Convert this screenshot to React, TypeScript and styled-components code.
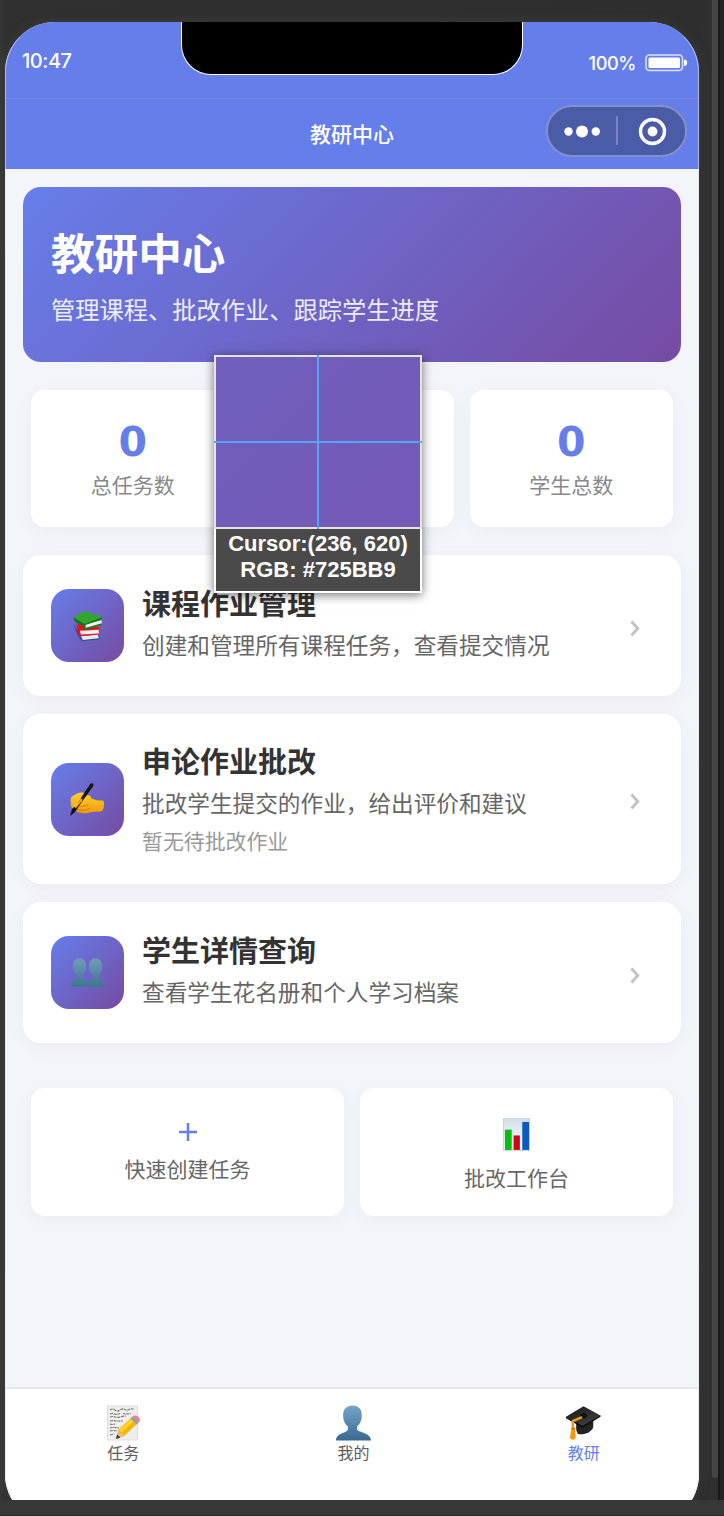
import React from 'react';
import styled, { createGlobalStyle } from 'styled-components';

const GlobalStyle = createGlobalStyle`
  * { box-sizing: border-box; }
  html, body { margin: 0; padding: 0; }
  body {
    background: #2e2e2e;
    font-family: Inter, "Noto Sans CJK SC", sans-serif;
    overflow: hidden;
  }
  svg { display: block; flex: none; }
`;

const accent = '#667eea';
const brandGradient = 'linear-gradient(135deg, #667eea 0%, #764ba2 100%)';

const Workspace = styled.div`
  display: flex;
  flex-direction: column;
  width: 724px;
  height: 1516px;
  overflow: hidden;
  background: linear-gradient(90deg, #373737 0, #303030 6px, #2e2e2e 700px, #303030 712px);
`;

const Stage = styled.div`
  display: flex;
  height: 1500px;
  overflow: hidden;
`;

const StageBody = styled.div`
  width: 712px;
  padding: 22px 0 0 5px;
`;

const ScrollThumb = styled.div`
  width: 6px;
  height: 1478px;
  background: #454545;
  border-radius: 0 0 2px 2px;
`;

const SideRail = styled.div`
  width: 6px;
  margin-left: auto;
  background: #242424;
  border-left: 2px solid #191919;
`;

const StageFooter = styled.div`
  height: 16px;
  background: #373737;
  border-bottom: 1px solid #2b2527;
`;

const Phone = styled.div`
  position: relative;
  display: flex;
  flex-direction: column;
  width: 694px;
  height: 1502px;
  border-radius: 50px;
  overflow: hidden;
  background: #f4f5fa;
  box-shadow: 0 0 12px rgba(90, 90, 90, 0.35);

  &::after {
    content: '';
    position: absolute;
    inset: 0;
    border: 1px solid rgba(225, 225, 230, 0.6);
    border-top-color: transparent;
    border-radius: 50px;
    pointer-events: none;
  }
`;

const StatusBar = styled.div`
  display: flex;
  justify-content: space-between;
  height: 77px;
  padding: 0 11px 0 17px;
  background: ${accent};
  border-bottom: 1px solid #7688e8;
  color: #fff;
`;

const Clock = styled.span`
  width: 159px;
  padding-top: 27px;
  font-size: 20px;
  line-height: 24px;
  font-weight: 500;
  letter-spacing: -0.45px;
`;

const Notch = styled.div`
  width: 342px;
  height: 53px;
  background: #000;
  border: 1.5px solid #fff;
  border-top: 0;
  border-radius: 0 0 30px 30px;
`;

const Power = styled.div`
  display: flex;
  justify-content: flex-end;
  gap: 9px;
  width: 165px;
  padding-top: 29px;
  font-size: 18.2px;
  line-height: 24px;
  font-weight: 500;
  letter-spacing: -0.4px;
  white-space: nowrap;

  svg { margin-top: 3px; }
`;

const NavBar = styled.header`
  display: grid;
  grid-template-columns: 1fr auto 1fr;
  height: 70px;
  padding: 0 12px;
  background: ${accent};
`;

const NavTitle = styled.h1`
  grid-column: 2;
  margin: 0;
  padding-top: 21px;
  color: #fff;
  font-size: 21px;
  line-height: 30px;
  font-weight: 500;
`;

const Capsule = styled.div`
  justify-self: end;
  display: flex;
  align-items: center;
  width: 141px;
  height: 52px;
  margin-top: 6px;
  border: 2px solid #8490cb;
  border-radius: 26px;
  background: #4a5ba8;
`;

const Content = styled.main`
  flex: none;
  height: 1218px;
  padding: 18px 18px 0;
`;

const Hero = styled.section`
  height: 175px;
  padding: 38px 28px 0;
  border-radius: 18px;
  background: ${brandGradient};
  color: #fff;
`;

const HeroTitle = styled.h2`
  margin: 0;
  font-size: 43.6px;
  line-height: 60px;
  font-weight: 700;
`;

const HeroText = styled.p`
  margin: 9px 0 0;
  font-size: 24.25px;
  line-height: 34px;
  opacity: 0.88;
`;

const CardRow = styled.section<{ $top: number }>`
  display: flex;
  gap: 16px;
  margin: ${(p) => p.$top}px 8px 0;
`;

const Card = styled.div`
  flex: 1;
  border-radius: 14px;
  background: #fff;
  box-shadow: 0 4px 20px rgba(0, 0, 0, 0.04);
  text-align: center;
`;

const StatCard = styled(Card)`
  height: 137px;
  padding-top: 28px;
`;

const StatValue = styled.div`
  height: 50px;
  color: ${accent};
  font-family: "DejaVu Sans", sans-serif;
  font-size: 41px;
  line-height: 48px;
  font-weight: 700;
`;

const StatLabel = styled.div`
  margin-top: 3px;
  color: #888;
  font-size: 21px;
  line-height: 30px;
`;

const MenuList = styled.section`
  display: flex;
  flex-direction: column;
  gap: 18px;
  margin-top: 28px;
`;

const MenuItem = styled.article<{ $height: number }>`
  display: flex;
  align-items: center;
  height: ${(p) => p.$height}px;
  padding: 0 41px 0 28px;
  border-radius: 18px;
  background: #fff;
  box-shadow: 0 4px 20px rgba(0, 0, 0, 0.04);
`;

const MenuIcon = styled.div`
  display: flex;
  align-items: center;
  justify-content: center;
  width: 73px;
  height: 73px;
  border-radius: 18px;
  background: ${brandGradient};
`;

const MenuText = styled.div`
  flex: 1;
  margin-left: 18px;
  padding-bottom: 2px;
  white-space: nowrap;
`;

const MenuTitle = styled.h3`
  margin: 0;
  color: #333;
  font-size: 29px;
  line-height: 40px;
  font-weight: 700;
`;

const MenuDesc = styled.p`
  margin: 3px 0 0;
  color: #666;
  font-size: 22.65px;
  line-height: 36px;
`;

const MenuNote = styled.p`
  margin: 9px 0 0;
  color: #999;
  font-size: 20.9px;
  line-height: 22px;
`;

const MenuArrow = styled.span`
  padding-top: 5px;
`;

const QuickCard = styled(Card)`
  display: flex;
  flex-direction: column;
  align-items: center;
  height: 128px;
  padding-top: 30px;
`;

const QuickIcon = styled.div<{ $height: number }>`
  height: ${(p) => p.$height}px;
`;

const QuickLabel = styled.div`
  margin-top: 8px;
  color: #666;
  font-size: 21px;
  line-height: 30px;
`;

const TabBar = styled.nav`
  display: flex;
  flex: 1;
  padding-left: 3px;
  border-top: 2px solid #e8e8ec;
  background: #fff;
`;

const Tab = styled.div<{ $active?: boolean }>`
  display: flex;
  flex: 1;
  flex-direction: column;
  align-items: center;
  padding-top: 16px;
  color: ${(p) => (p.$active ? accent : '#5c5c5c')};
  font-size: 16px;
  line-height: 24px;
`;

const Picker = styled.aside`
  position: absolute;
  top: 355px;
  left: 214px;
  display: flex;
  flex-direction: column;
  width: 208px;
  height: 238px;
  border: 2px solid #fff;
  background: #4a4a4a;
  box-shadow: 0 2px 10px rgba(0, 0, 0, 0.55);
  color: #fff;
  font-family: "Liberation Sans", Arial, sans-serif;
  font-size: 22px;
  line-height: 26px;
  font-weight: 700;
  text-align: center;
  white-space: nowrap;
`;

const PickerLens = styled.div`
  height: 174px;
  margin: -2px -2px 2px;
  border: 2px solid #e4e4e6;
  background: linear-gradient(135deg, #705ebd, #755ab6);

  svg { margin: -2px; }
`;

const Battery = () => (
  <svg width="43" height="18" viewBox="0 0 43 18">
    <rect x="1" y="1" width="36.5" height="15.5" rx="3.5" fill="none" stroke="#dfe4fb" strokeWidth="1.5" />
    <rect x="3.5" y="3.5" width="31.5" height="10.5" rx="1.5" fill="#fff" />
    <path d="M39 5.5c4.2 0 4.2 6.5 0 6.5z" fill="#fff" />
  </svg>
);

const CapsuleButtons = () => (
  <svg width="137" height="48" viewBox="548 107 137 48">
    <circle cx="568.5" cy="131.5" r="4.2" fill="#fff" />
    <circle cx="582" cy="131.5" r="6" fill="#fff" />
    <circle cx="595.8" cy="131.5" r="4.2" fill="#fff" />
    <path d="M617 116v29" stroke="#8490cb" strokeWidth="1.6" />
    <circle cx="652.5" cy="131.5" r="12" fill="none" stroke="#fff" strokeWidth="3.4" />
    <circle cx="652.5" cy="131.5" r="4.9" fill="#fff" />
  </svg>
);

const Books = () => (
  <svg width="31" height="32" viewBox="0 0 32 34">
    <path d="M1 14l7 14 20-2 1 5-18 2C7 31 3 22 1 14z" fill="#254f92" />
    <path d="M9 28l18-2 1 4-17 2z" fill="#e9e9ec" />
    <path d="M5 15l23 3 1 3-1 5-20 2c-4-3-4-9-3-13z" fill="#df1720" />
    <path d="M8 22l20-1v4l-19 1z" fill="#f0eeee" />
    <path d="M1 8L12 1l19 6-2 3-17 6z" fill="#33a52d" />
    <path d="M1 8l12 7 18-7v2l-18 7C8 16 2 14 1 8z" fill="#0c741c" />
    <path d="M14 15l17-4v4l-17 4c-1-1-1-3 0-4z" fill="#f2f3ee" />
    <path d="M13 15l18-7v2l-17 6v3l17-5v2l-17 5c-3-2-3-4-1-6z" fill="#117f20" />
  </svg>
);

const WritingHand = () => (
  <svg width="37" height="35" viewBox="1 0 38 36">
    <defs>
      <linearGradient id="skin" x1="0" y1="0" x2="0" y2="1">
        <stop offset="0" stopColor="#ffd12c" />
        <stop offset="1" stopColor="#f09c0b" />
      </linearGradient>
    </defs>
    <path d="M3 25c0-5-1-8 1-10 4-3 8-5 12-4 2 0 2 2 1 3l-3 3 5-3c3-1 5 1 5 3 4 2 8 2 12 2 2 3 1 8-1 11-4 1-8 0-12 1-5 2-12 1-17-2z" fill="url(#skin)" />
    <path d="M9 28c4 2 10 1 14-1M11 24c2 2 6 1 10-1" stroke="#c77a08" strokeWidth="1" fill="none" />
    <path d="M2 35l2-7L9 23l13-20 2-2 2 1v2L13 22l-6 9z" fill="#151515" />
    <path d="M5 24c3-5 6-7 9-7 2 1 0 3-2 5l-4 5z" fill="#fdbb1c" />
    <path d="M14 17l-4 5" stroke="#c77a08" strokeWidth="1" />
  </svg>
);

const bust = 'M11.5 23v-2.5C8 17 7 14 7 10C6.500 4 10 0 16 0s9.500 4 9 10c0 4-1 7-4.500 10.500V23c0 3 13.500 3 13.500 11H0c0-8 11.500-7 11.500-11z';

const People = () => (
  <svg width="36" height="30" viewBox="0 0 38 31">
    <defs>
      <linearGradient id="people" x1="0" y1="0" x2="0" y2="1">
        <stop offset="0" stopColor="#719dbb" />
        <stop offset="1" stopColor="#3d748f" />
      </linearGradient>
    </defs>
    <g fill="url(#people)">
      <path d="M8 21v-3C4 15 3 12 3 8c0-5 3-8 7-8s7 3 7 8c0 4-1 7-4 10v3c3 2 8 2 8 9H1c-1-7 5-7 7-9z" />
      <path d="M25 21v-3c-4-3-5-6-5-10 0-5 3-8 7-8s7 3 7 8c0 4-1 7-4 10v3c3 2 6 3 6 9H19c-1-7 4-7 6-9z" />
    </g>
  </svg>
);

const Plus = () => (
  <svg width="18" height="28" viewBox="0 0 18 28">
    <path d="M9 5v18M0 14h18" stroke={accent} strokeWidth="2.5" />
  </svg>
);

const Chart = () => (
  <svg width="27" height="33" viewBox="0 0 28 34">
    <defs>
      <linearGradient id="paper" x1="0" y1="0" x2="0" y2="1">
        <stop offset="0" stopColor="#d4dfeb" />
        <stop offset="1" stopColor="#f6f8fa" />
      </linearGradient>
    </defs>
    <rect x=".5" y=".5" width="27" height="33" fill="url(#paper)" stroke="#c6d4df" />
    <rect x="2" y="12" width="7" height="21" fill="#08bd10" />
    <rect x="11" y="18" width="6.500" height="15" fill="#cc0713" />
    <rect x="20" y="4" width="7" height="29" fill="#075bbd" />
  </svg>
);

const Chevron = () => (
  <svg width="10" height="17" viewBox="0 0 10 17">
    <path d="M1.500 1.500L7.800 8.500L1.500 15.500" fill="none" stroke="#c2c2c2" strokeWidth="2.800" />
  </svg>
);

const Memo = () => (
  <svg width="34" height="36" viewBox="0 0 34 36">
    <rect x="1.500" y="1" width="30" height="34" fill="#eeeeec" stroke="#dededc" />
    <path d="M4 5q3-2 5 0t5 0 5-.5 4 0 5 0M4 9q2-1 4 0t6-.5M17 8.500q3 1 8 0M4 12q3-1 5 0t5 0 6-1M4 16q3-1 5 0h8M4 19q2 1 5 0M4 23q4-1 9 0M4 26q3-1 7 0M4 30l4-1" fill="none" stroke="#777" strokeWidth="1.100" strokeDasharray="3 .7" />
    <path d="M10 34l2-9 4 1 3 5z" fill="#e5c18e" />
    <path d="M10 34l1-4.500 3.500 3z" fill="#333" />
    <path d="M12 25l13-12 6 6-13 12-2-3-3 1z" fill="#f5b50b" />
    <path d="M13 25l13-12 2.500 2.500-13 12z" fill="#ffd42c" />
    <path d="M24.500 13.500l2-2 6 6-2 2z" fill="#8ba0b0" />
    <path d="M26.500 11.500c2-2 5-1 6.500 1s1 3 0 4.500l-1 1z" fill="#eb8092" />
  </svg>
);

const Person = () => (
  <svg width="35" height="36" viewBox="0 0 34 35">
    <defs>
      <linearGradient id="person" x1="0" y1="0" x2="0" y2="1">
        <stop offset="0" stopColor="#75a5c9" />
        <stop offset="1" stopColor="#396b91" />
      </linearGradient>
    </defs>
    <path d={bust} transform="translate(0 .5)" fill="url(#person)" />
  </svg>
);

const GradCap = () => (
  <svg width="35" height="36" viewBox="0 0 36 36">
    <defs>
      <linearGradient id="cap" x1="0" y1="0" x2="1" y2="1">
        <stop offset="0" stopColor="#171717" />
        <stop offset="1" stopColor="#484848" />
      </linearGradient>
    </defs>
    <path d="M11 16l17-2v8c-1 5-10 9-16 7-2-3-2-8-1-13z" fill="#222" />
    <path d="M0 11.500L18 .8l17.500 9.500L17 22z" fill="url(#cap)" />
    <path d="M0 11.500L17 21l18.500-11v1.500L17 23 0 13z" fill="#0b0b0b" />
    <ellipse cx="18" cy="10.500" rx="3.500" ry="2.800" fill="#111" />
    <path d="M16.500 12L7 16v8" fill="none" stroke="#ef9b16" strokeWidth="2.500" />
    <path d="M6 22h3l1 11c-1 3-5 3-6 0z" fill="#f39b10" />
    <path d="M5.500 24h4" stroke="#a95c05" strokeWidth="1" />
  </svg>
);

const Crosshair = () => (
  <svg width="208" height="174" viewBox="0 0 208 174">
    <path d="M104 0v174M0 87h208" stroke="#54a6f8" strokeWidth="2" />
  </svg>
);

const stats = [
  { value: '0', label: '总任务数' },
  { value: '', label: '' },
  { value: '0', label: '学生总数' },
];

const menu = [
  { title: '课程作业管理', desc: '创建和管理所有课程任务，查看提交情况', height: 141, icon: <Books /> },
  { title: '申论作业批改', desc: '批改学生提交的作业，给出评价和建议', note: '暂无待批改作业', height: 170, icon: <WritingHand /> },
  { title: '学生详情查询', desc: '查看学生花名册和个人学习档案', height: 141, icon: <People /> },
];

export default function App() {
  return (
    <>
      <GlobalStyle />
      <Workspace>
        <Stage>
          <StageBody>
            <Phone>
              <StatusBar>
                <Clock>10:47</Clock>
                <Notch />
                <Power>100%<Battery /></Power>
              </StatusBar>
              <NavBar>
                <NavTitle>教研中心</NavTitle>
                <Capsule><CapsuleButtons /></Capsule>
              </NavBar>
              <Content>
                <Hero>
                  <HeroTitle>教研中心</HeroTitle>
                  <HeroText>管理课程、批改作业、跟踪学生进度</HeroText>
                </Hero>
                <CardRow $top={28}>
                  {stats.map((s, i) => (
                    <StatCard key={i}>
                      <StatValue>{s.value}</StatValue>
                      <StatLabel>{s.label}</StatLabel>
                    </StatCard>
                  ))}
                </CardRow>
                <MenuList>
                  {menu.map((m) => (
                    <MenuItem key={m.title} $height={m.height}>
                      <MenuIcon>{m.icon}</MenuIcon>
                      <MenuText>
                        <MenuTitle>{m.title}</MenuTitle>
                        <MenuDesc>{m.desc}</MenuDesc>
                        {m.note && <MenuNote>{m.note}</MenuNote>}
                      </MenuText>
                      <MenuArrow><Chevron /></MenuArrow>
                    </MenuItem>
                  ))}
                </MenuList>
                <CardRow $top={45}>
                  <QuickCard>
                    <QuickIcon $height={29}><Plus /></QuickIcon>
                    <QuickLabel>快速创建任务</QuickLabel>
                  </QuickCard>
                  <QuickCard>
                    <QuickIcon $height={38}><Chart /></QuickIcon>
                    <QuickLabel>批改工作台</QuickLabel>
                  </QuickCard>
                </CardRow>
              </Content>
              <TabBar>
                <Tab><Memo />任务</Tab>
                <Tab><Person />我的</Tab>
                <Tab $active><GradCap />教研</Tab>
              </TabBar>
            </Phone>
          </StageBody>
          <ScrollThumb />
          <SideRail />
        </Stage>
        <StageFooter />
      </Workspace>
      <Picker>
        <PickerLens><Crosshair /></PickerLens>
        <span>Cursor:(236, 620)</span>
        <span>RGB: #725BB9</span>
      </Picker>
    </>
  );
}
